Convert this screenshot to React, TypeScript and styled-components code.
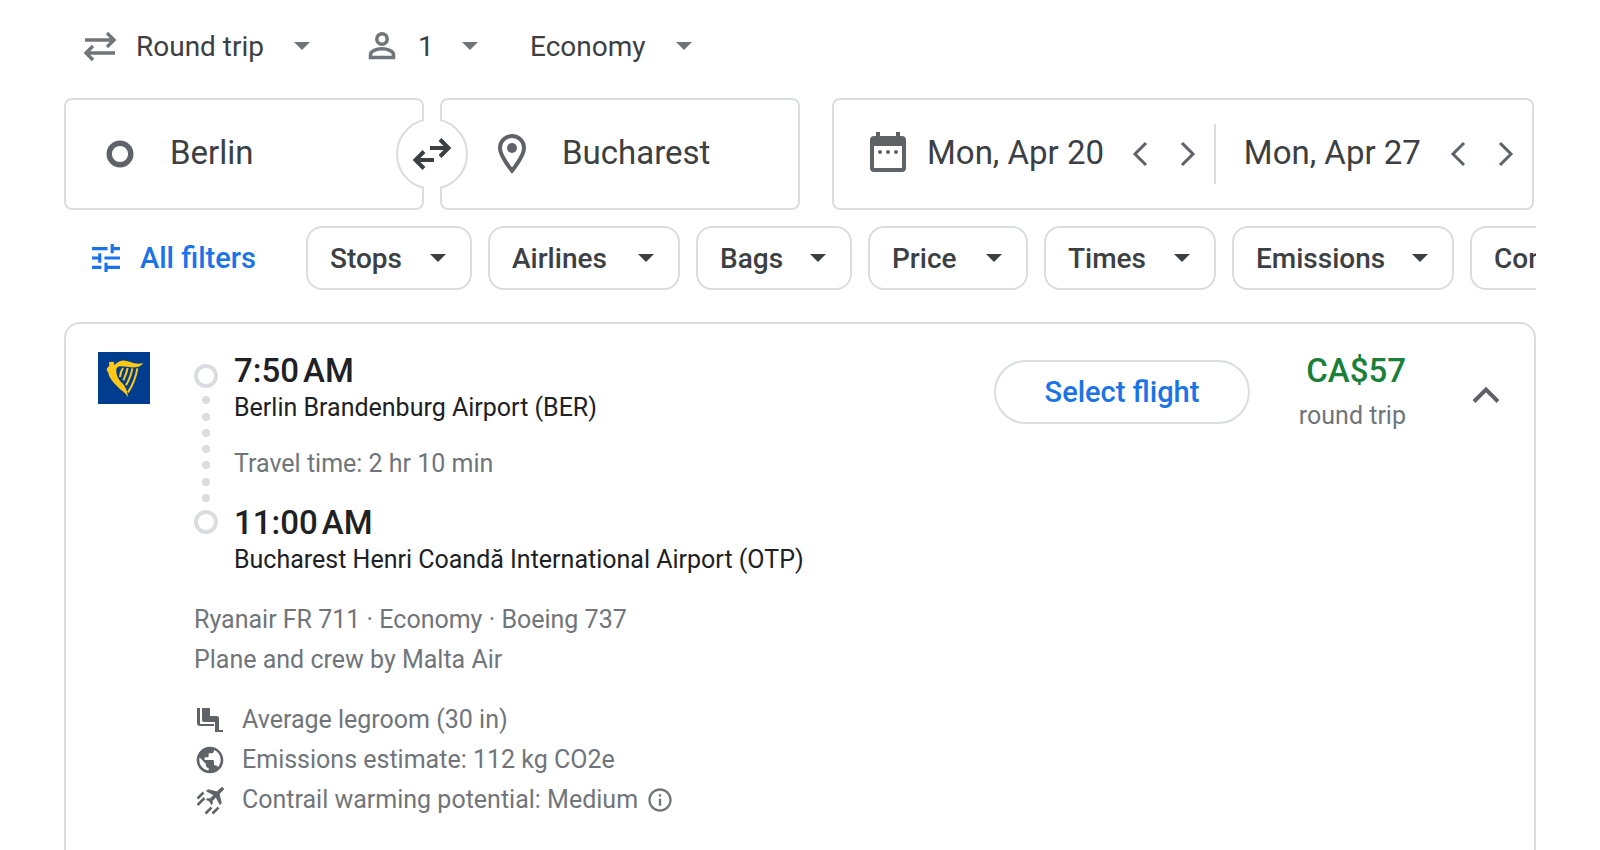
import React from 'react';
import styled, { createGlobalStyle, css } from 'styled-components';

const Global = createGlobalStyle`
  *, *::before, *::after { box-sizing: border-box; }
  body { margin: 0; background: #fff; color: #3c4043; font-family: Roboto, Arial, sans-serif; }
  button, input, select { font: inherit; color: inherit; border: 0; background: none; padding: 0; margin: 0; }
  p, h2, h3 { margin: 0; font-weight: 400; }
  svg { display: block; flex: none; }
`;

const line = '#dadce0';
const blue = '#1a73e8';
const grey = '#70757a';
const slate = '#5f6368';

const Page = styled.div`
  display: flex;
  flex-direction: column;
  min-height: 100vh;
  padding: 14px 64px 0;
`;

const TripOptions = styled.div`
  display: flex;
  align-items: center;
  height: 64px;
  padding-left: 18px;
  color: ${grey};
`;

const TripOption = styled.label<{ $gap: number; $after: number }>`
  display: flex;
  align-items: center;
  gap: ${p => p.$gap}px;
  margin-right: ${p => p.$after}px;
`;

const TripSelect = styled.select<{ $width: number }>`
  appearance: none;
  width: ${p => p.$width}px;
  padding-top: 2px;
  color: #3c4043;
  font-size: 28px;
  line-height: 40px;
`;

const CaretBox = styled.span`
  margin-left: 8px;
`;

const SearchRow = styled.div`
  display: grid;
  grid-template-columns: minmax(0, 736fr) minmax(0, 702fr);
  gap: 32px;
  padding-right: 2px;
  margin-top: 20px;
`;

const Places = styled.div`
  position: relative;
  display: grid;
  grid-template-columns: minmax(0, 1fr) minmax(0, 1fr);
  gap: 16px;
`;

const outlined = css`
  border: 2px solid ${line};
  border-radius: 8px;
  height: 112px;
`;

const Place = styled.label<{ $pad: number; $gap: number }>`
  ${outlined}
  display: flex;
  align-items: center;
  gap: ${p => p.$gap}px;
  padding-left: ${p => p.$pad}px;
  color: ${slate};
`;

const Field = styled.input`
  flex: 1;
  width: 100%;
  min-width: 0;
  color: #3c4043;
  font-size: 33px;
  line-height: 40px;
  height: 48px;
  margin-bottom: 4px;
  outline: 0;
`;

const SwapButton = styled.button`
  position: absolute;
  left: calc(50% - 36px);
  top: 20px;
  width: 72px;
  height: 72px;
  border: 2px solid ${line};
  border-radius: 50%;
  background: #fff;
  display: flex;
  align-items: center;
  justify-content: center;

  &::before {
    content: '';
    position: absolute;
    left: 26px;
    top: -2px;
    width: 16px;
    height: 72px;
    background: #fff;
  }
  svg { position: relative; }
`;

const Dates = styled.div`
  ${outlined}
  display: flex;
  align-items: center;
  padding-left: 36px;
  color: ${slate};
`;

const DateGroup = styled.div<{ $grow: number }>`
  display: flex;
  align-items: center;
  flex: ${p => p.$grow} 1 0;
  min-width: 0;
  padding-right: 2px;
`;

const DateLabel = styled.label`
  display: flex;
  align-items: center;
  gap: 21px;
  flex: 1;
  min-width: 0;
`;

const StepButton = styled.button`
  display: flex;
  flex: none;
  justify-content: center;
  width: 48px;
`;

const Divider = styled.span`
  width: 2px;
  height: 60px;
  margin-right: 28px;
  background: ${line};
`;

const Filters = styled.div`
  display: flex;
  gap: 16px;
  margin-top: 16px;
  overflow: hidden;
`;

const AllFilters = styled.button`
  display: flex;
  align-items: center;
  flex: none;
  gap: 20px;
  width: 226px;
  height: 64px;
  padding-left: 28px;
  color: ${blue};
  font-size: 29px;
  font-weight: 500;
`;

const Chip = styled.button<{ $width: number }>`
  display: flex;
  align-items: center;
  justify-content: space-between;
  flex: none;
  width: ${p => p.$width}px;
  height: 64px;
  padding: 0 24px 0 22px;
  border: 2px solid ${line};
  border-radius: 16px;
  color: #3c4043;
  font-size: 28px;
  font-weight: 500;
  white-space: nowrap;
`;

const Card = styled.article`
  flex: 1;
  display: flex;
  align-items: flex-start;
  margin-top: 32px;
  padding: 28px 32px 24px;
  border: 2px solid ${line};
  border-bottom: 0;
  border-radius: 16px 16px 0 0;
`;

const Details = styled.div`
  flex: 1;
  min-width: 0;
  margin-left: 44px;
  color: ${grey};
  font-size: 25px;
  line-height: 40px;
`;

const Legs = styled.div`
  display: flex;
  gap: 16px;
`;

const Timeline = styled.div`
  display: flex;
  flex-direction: column;
  align-items: center;
  justify-content: space-between;
  width: 24px;
  height: 170px;
  margin-top: 12px;
`;

const Stop = styled.span`
  width: 24px;
  height: 24px;
  border: 4px solid ${line};
  border-radius: 50%;
`;

const Dot = styled.span`
  width: 8px;
  height: 8px;
  border-radius: 50%;
  background: ${line};
`;

const Time = styled.h3`
  padding-bottom: 2px;
  color: #202124;
  font-size: 33px;
  font-weight: 500;
  line-height: 38px;
`;

const Airport = styled.p`
  color: #202124;
  line-height: 32px;
`;

const Travel = styled.p`
  padding: 20px 0;
  line-height: 40px;
`;

const FlightInfo = styled.div`
  margin-top: 24px;
`;

const Facts = styled.ul`
  list-style: none;
  margin: 20px 0 0;
  padding: 0;
`;

const Fact = styled.li`
  display: flex;
  align-items: center;
  gap: 16px;
  height: 40px;
`;

const FactIcon = styled.span`
  display: flex;
  color: ${slate};
`;

const InfoButton = styled.button`
  color: ${grey};
  margin-left: -8px;
`;

const SelectButton = styled.button`
  flex: none;
  height: 64px;
  width: 256px;
  margin-top: 8px;
  border: 2px solid ${line};
  border-radius: 32px;
  color: ${blue};
  font-size: 29px;
  font-weight: 500;
`;

const PriceBlock = styled.div`
  flex: none;
  width: 156px;
  text-align: right;
  color: ${grey};
  font-size: 25px;
  line-height: 40px;
`;

const Price = styled.p`
  padding-bottom: 6px;
  color: #188038;
  font-size: 33px;
  font-weight: 500;
  line-height: 38px;
`;

const Collapse = styled.button`
  flex: none;
  margin: 20px -4px 0 60px;
  color: ${slate};
`;

const Caret = () => (
  <svg width="16" height="8" viewBox="0 0 16 8" fill="currentColor"><path d="M0 0h16L8 8z" /></svg>
);

const Step = ({ back, label }: { back?: boolean; label: string }) => (
  <StepButton aria-label={label}>
    <svg width="16" height="26" viewBox="0 0 16 26" fill="none" stroke="currentColor" strokeWidth="3">
      <path d={back ? 'M14 2 3 13l11 11' : 'M2 2l11 11L2 24'} />
    </svg>
  </StepButton>
);

const filters = [
  { name: 'Stops', width: 166 },
  { name: 'Airlines', width: 192 },
  { name: 'Bags', width: 156 },
  { name: 'Price', width: 160 },
  { name: 'Times', width: 172 },
  { name: 'Emissions', width: 222 },
  { name: 'Con', width: 140 },
];

const RyanairLogo = () => (
  <svg width="52" height="52" viewBox="0 0 156 156" role="img" aria-label="Ryanair">
    <path fill="#003d8f" d="M0 0h156v156H0z" />
    <path
      fill="#ffc815"
      d="M33 30l13-1 3 5-2 5c7-1 11-11 25-13 20-2 34 14 64 8-5 7-13 12-24 12-18 1-32-4-46-3-10 1-12 9-11 18 2 16 10 25 20 35 8 9 13 20 15 39-10-16-25-22-36-36-12-14-21-22-23-37l-5-8c0-5 3-9 8-12z"
    />
    <path
      fill="none"
      stroke="#ffc815"
      strokeWidth="6"
      d="M75 48q-7 10-9 27M89 48q-3 16-13 37M103 49q-4 24-19 51M118 49q-6 38-28 72"
    />
  </svg>
);

export default function App() {
  return (
    <Page>
      <Global />
      <TripOptions>
        <TripOption $gap={18} $after={56}>
          <svg width="36" height="32" viewBox="0 0 36 32" fill="none" stroke="currentColor" strokeWidth="3.4">
            <path d="M3 10h29M25 3l7 7-7 7M33 23H4M11 16l-7 7 7 7" />
          </svg>
          <TripSelect $width={132} aria-label="Trip type"><option>Round trip</option></TripSelect>
          <CaretBox><Caret /></CaretBox>
        </TripOption>
        <TripOption $gap={20} $after={52}>
          <svg width="32" height="32" viewBox="0 0 32 32" fill="none" stroke="currentColor" strokeWidth="3.5">
            <circle cx="16" cy="9" r="5.2" />
            <path d="M4.500 27.500v-3c0-3.500 6-5.700 11.500-5.700s11.500 2.200 11.500 5.700v3z" />
          </svg>
          <TripSelect $width={16} aria-label="Passengers"><option>1</option></TripSelect>
          <CaretBox><Caret /></CaretBox>
        </TripOption>
        <TripOption $gap={22} $after={0}>
          <TripSelect $width={116} aria-label="Cabin class"><option>Economy</option></TripSelect>
          <CaretBox><Caret /></CaretBox>
        </TripOption>
      </TripOptions>

      <SearchRow>
        <Places>
          <Place $pad={40} $gap={36}>
            <svg width="28" height="28" viewBox="0 0 28 28" fill="none" stroke="currentColor" strokeWidth="5.400">
              <circle cx="14" cy="14" r="10.800" />
            </svg>
            <Field aria-label="Where from?" defaultValue="Berlin" />
          </Place>
          <Place $pad={56} $gap={36}>
            <svg width="28" height="40" viewBox="0 0 28 40">
              <path fill="none" stroke="currentColor" strokeWidth="4" d="M14 2C7.400 2 2 7.200 2 14c0 8.200 12 22.600 12 22.600S26 22.200 26 14C26 7.200 20.600 2 14 2z" />
              <circle cx="14" cy="14" r="5" fill="currentColor" />
            </svg>
            <Field aria-label="Where to?" defaultValue="Bucharest" />
          </Place>
          <SwapButton aria-label="Swap origin and destination">
            <svg width="40" height="32" viewBox="0 0 40 32" fill="none" stroke="#3c4043" strokeWidth="4">
              <path d="M18 10h19M28 1.500l8.500 8.500-8.500 8.500M22 22H3M12 13.500 3.500 22l8.500 8.500" />
            </svg>
          </SwapButton>
        </Places>
        <Dates>
          <DateGroup $grow={344}>
            <DateLabel>
              <svg width="36" height="44" viewBox="0 0 36 44" fill="currentColor">
                <path fillRule="evenodd" d="M6 0h4v4h16V0h4v4h2a4 4 0 0 1 4 4v28a4 4 0 0 1-4 4H4a4 4 0 0 1-4-4V8a4 4 0 0 1 4-4h2zM4 14v22h28V14z" />
                <circle cx="10" cy="20" r="2" />
                <circle cx="18" cy="20" r="2" />
                <circle cx="26" cy="20" r="2" />
              </svg>
              <Field aria-label="Departure" defaultValue="Mon, Apr 20" />
            </DateLabel>
            <Step back label="Previous departure day" />
            <Step label="Next departure day" />
          </DateGroup>
          <Divider />
          <DateGroup $grow={288}>
            <Field aria-label="Return" defaultValue="Mon, Apr 27" />
            <Step back label="Previous return day" />
            <Step label="Next return day" />
          </DateGroup>
        </Dates>
      </SearchRow>

      <Filters>
        <AllFilters>
          <svg width="28" height="28" viewBox="3 3 18 18" fill="currentColor">
            <path d="M3 17v2h6v-2H3zM3 5v2h10V5H3zm10 16v-2h8v-2h-8v-2h-2v6h2zM7 9v2H3v2h4v2h2V9H7zm14 4v-2H11v2h10zm-6-4h2V7h4V5h-4V3h-2v6z" />
          </svg>
          All filters
        </AllFilters>
        {filters.map(f => (
          <Chip key={f.name} $width={f.width}>{f.name}<Caret /></Chip>
        ))}
      </Filters>

      <Card>
        <RyanairLogo />
        <Details>
          <Legs>
            <Timeline>
              <Stop />
              {Array.from({ length: 7 }, (_, i) => <Dot key={i} />)}
              <Stop />
            </Timeline>
            <div>
              <Time>7:50{'\u202f'}AM</Time>
              <Airport>Berlin Brandenburg Airport (BER)</Airport>
              <Travel>Travel time: 2 hr 10 min</Travel>
              <Time>11:00{'\u202f'}AM</Time>
              <Airport>Bucharest Henri Coandă International Airport (OTP)</Airport>
            </div>
          </Legs>
          <FlightInfo>
            <p>Ryanair FR 711 · Economy · Boeing 737</p>
            <p>Plane and crew by Malta Air</p>
          </FlightInfo>
          <Facts>
            <Fact>
              <FactIcon>
                <svg width="32" height="32" viewBox="0 0 32 32" fill="currentColor">
                  <path d="M3 4h3v16h14v2H6a3 3 0 0 1-3-3zM8 4h8v8h7a2 2 0 0 1 2 2v12h4v2h-8V18H10a2 2 0 0 1-2-2z" />
                </svg>
              </FactIcon>
              Average legroom (30 in)
            </Fact>
            <Fact>
              <FactIcon>
                <svg width="32" height="32" viewBox="0 0 24 24" fill="currentColor">
                  <path d="M12 2C6.480 2 2 6.480 2 12s4.480 10 10 10 10-4.480 10-10S17.520 2 12 2zm-1 17.930c-3.950-.49-7-3.850-7-7.930 0-.62.080-1.210.21-1.790L9 15v1c0 1.100.9 2 2 2v1.930zm6.900-2.540c-.26-.81-1-1.390-1.900-1.390h-1v-3c0-.55-.45-1-1-1H8v-2h2c.55 0 1-.45 1-1V7h2c1.100 0 2-.9 2-2v-.41c2.930 1.190 5 4.060 5 7.410 0 2.080-.8 3.970-2.100 5.390z" />
                </svg>
              </FactIcon>
              Emissions estimate: 112 kg CO2e
            </Fact>
            <Fact>
              <FactIcon>
                <svg width="32" height="32" viewBox="0 0 32 32" fill="currentColor">
                  <path
                    stroke="currentColor"
                    strokeWidth="0.8"
                    transform="translate(22 11) rotate(45) translate(-11.500 -12)"
                    d="M21 16v-2l-8-5V3.500c0-.83-.67-1.500-1.500-1.500S10 2.670 10 3.500V9l-8 5v2l8-2.500V19l-2 1.500V22l3.500-1 3.500 1v-1.500L13 19v-5.500l8 2.500z"
                  />
                  <path d="m3.500 14.500 6-6M3.500 21l7-7M11.500 29.500l6-6M18.500 29.500l6-6" stroke="currentColor" strokeWidth="2.500" />
                </svg>
              </FactIcon>
              Contrail warming potential: Medium
              <InfoButton aria-label="About contrail warming potential">
                <svg width="28" height="28" viewBox="0 0 24 24" fill="currentColor">
                  <path d="M11 7h2v2h-2zm0 4h2v6h-2zm1-9C6.480 2 2 6.480 2 12s4.480 10 10 10 10-4.480 10-10S17.520 2 12 2zm0 18c-4.410 0-8-3.590-8-8s3.590-8 8-8 8 3.590 8 8-3.590 8-8 8z" />
                </svg>
              </InfoButton>
            </Fact>
          </Facts>
        </Details>
        <SelectButton>Select flight</SelectButton>
        <PriceBlock>
          <Price>CA$57</Price>
          round trip
        </PriceBlock>
        <Collapse aria-label="Hide flight details">
          <svg width="40" height="40" viewBox="0 0 40 40" fill="none" stroke="currentColor" strokeWidth="4">
            <path d="M8 29.500 20 17.500l12 12" />
          </svg>
        </Collapse>
      </Card>
    </Page>
  );
}
